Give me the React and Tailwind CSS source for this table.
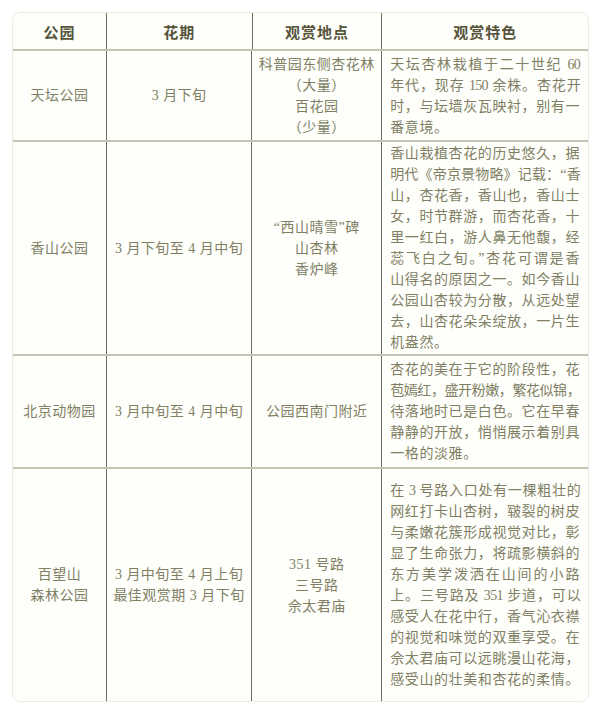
import React from "react";

const rows = [
    {
        park: ["天坛公园"],
        period: ["3 月下旬"],
        spots: ["科普园东侧杏花林", "（大量）", "百花园", "（少量）"],
        desc: [
            "天坛杏林栽植于二十世纪 60",
            "年代，现存 150 余株。杏花开",
            "时，与坛墙灰瓦映衬，别有一",
            "番意境。",
        ],
        h: "h-[91px]",
    },
    {
        park: ["香山公园"],
        period: ["3 月下旬至 4 月中旬"],
        spots: ["“西山晴雪”碑", "山杏林", "香炉峰"],
        desc: [
            "香山栽植杏花的历史悠久，据",
            "明代《帝京景物略》记载：“香",
            "山，杏花香，香山也，香山士",
            "女，时节群游，而杏花香，十",
            "里一红白，游人鼻无他馥，经",
            "蕊飞白之旬。”杏花可谓是香",
            "山得名的原因之一。如今香山",
            "公园山杏较为分散，从远处望",
            "去，山杏花朵朵绽放，一片生",
            "机盎然。",
        ],
        h: "h-[214px]",
    },
    {
        park: ["北京动物园"],
        period: ["3 月中旬至 4 月中旬"],
        spots: ["公园西南门附近"],
        desc: [
            "杏花的美在于它的阶段性，花",
            "苞嫣红，盛开粉嫩，繁花似锦，",
            "待落地时已是白色。它在早春",
            "静静的开放，悄悄展示着别具",
            "一格的淡雅。",
        ],
        h: "h-[113px]",
    },
    {
        park: ["百望山", "森林公园"],
        period: ["3 月中旬至 4 月上旬", "最佳观赏期 3 月下旬"],
        spots: ["351 号路", "三号路", "佘太君庙"],
        desc: [
            "在 3 号路入口处有一棵粗壮的",
            "网红打卡山杏树，皲裂的树皮",
            "与柔嫩花簇形成视觉对比，彰",
            "显了生命张力，将疏影横斜的",
            "东方美学泼洒在山间的小路",
            "上。三号路及 351 步道，可以",
            "感受人在花中行，香气沁衣襟",
            "的视觉和味觉的双重享受。在",
            "佘太君庙可以远眺漫山花海，",
            "感受山的壮美和杏花的柔情。",
        ],
        h: "h-[232px]",
    },
];

const headers = ["公园", "花期", "观赏地点", "观赏特色"];
const widths = ["w-[94px]", "w-[146px]", "w-[130px]", "w-[206px]"];

const Lines = ({ lines }) => (
    <div className="text-center">
        {lines.map((l, i) => (
            <div key={i}>{l}</div>
        ))}
    </div>
);

// a line is tightened when it holds more characters than the column fits
const lineClass = (l, last) => {
    let c = "whitespace-nowrap";
    if (!last) c += " text-justify [text-align-last:justify]";
    if (l.length >= 14) c += " tracking-[-0.7px]";
    return c;
};

export default function App() {
    return (
        <div className="min-h-[708px] bg-white pt-3 pl-3">
            <div
                className="w-[577px] rounded-lg border border-[#ecebe3] bg-[#fefefb] text-[14px] leading-[21px] text-[#807f63] overflow-hidden"
                style={{ fontFamily: '"Liberation Serif", "Noto Sans CJK SC", serif' }}
            >
                <div className="flex h-[38px] border-b-2 border-[#c4c3b4]">
                    {headers.map((t, i) => (
                        <div
                            key={t}
                            className={`${widths[i]} flex items-center justify-center text-[15px] font-bold tracking-[1px] text-[#56553c] ${i < 3 ? "border-r border-[#6f6e58]" : ""}`}
                            style={{ fontFamily: '"Noto Sans CJK SC", sans-serif' }}
                        >
                            {t}
                        </div>
                    ))}
                </div>
                {rows.map((r, ri) => (
                    <div
                        key={ri}
                        className={`flex ${r.h} ${ri < rows.length - 1 ? "border-b-2 border-[#c4c3b4]" : ""}`}
                    >
                        <div className={`${widths[0]} flex items-center justify-center border-r border-[#6f6e58] tracking-[0.5px]`}>
                            <Lines lines={r.park} />
                        </div>
                        <div className={`${widths[1]} flex items-center justify-center border-r border-[#6f6e58] tracking-[0.5px]`}>
                            <Lines lines={r.period} />
                        </div>
                        <div className={`${widths[2]} flex items-center justify-center border-r border-[#6f6e58] tracking-[0.5px]`}>
                            <Lines lines={r.spots} />
                        </div>
                        <div className={`${widths[3]} flex flex-col justify-center px-2 tracking-[0.6px]`}>
                            {r.desc.map((l, i) => (
                                <div key={i} className={lineClass(l, i === r.desc.length - 1)}>
                                    {l}
                                </div>
                            ))}
                        </div>
                    </div>
                ))}
            </div>
        </div>
    );
}
